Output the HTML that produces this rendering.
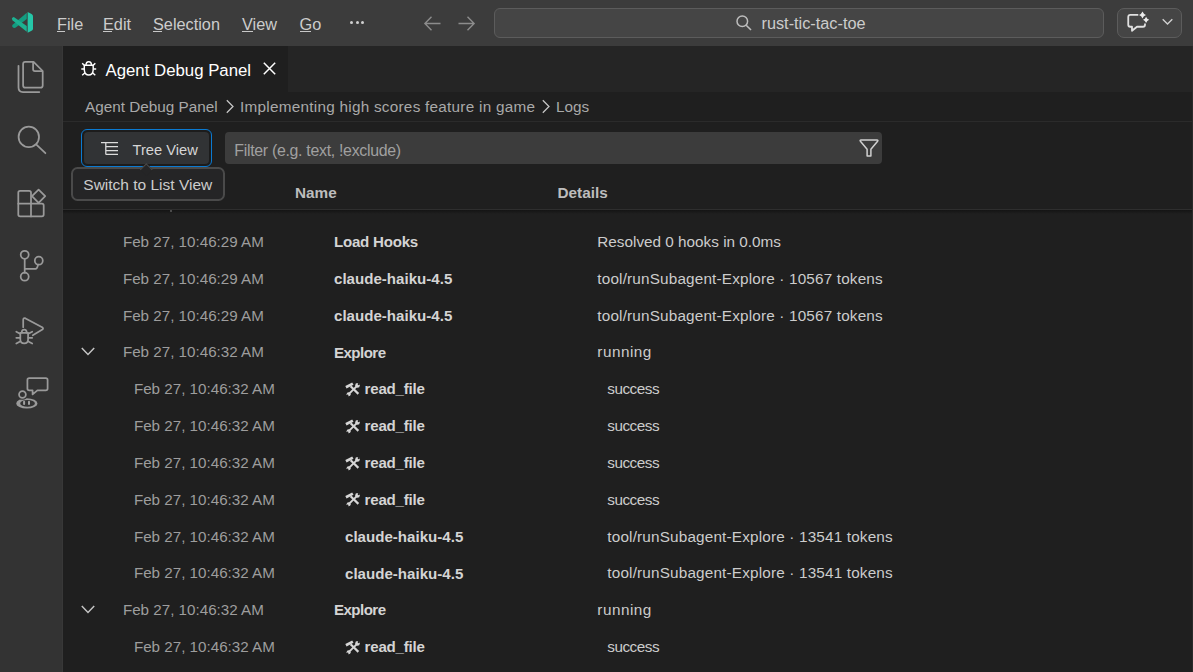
<!DOCTYPE html><html><head><meta charset="utf-8"><style>
html,body{margin:0;padding:0;width:1193px;height:672px;overflow:hidden;background:#1f1f1f;}
body{position:relative;font-family:"Liberation Sans",sans-serif;}
.t{position:absolute;white-space:nowrap;}
.b{position:absolute;box-sizing:border-box;}
svg{position:absolute;overflow:visible;}
u{text-decoration:none;border-bottom:1px solid currentColor;}
</style></head><body>
<div class="b" style="left:0;top:0;width:1193px;height:46px;background:#3c3c3c"></div>
<svg style="left:8px;top:8px" width="30" height="30" viewBox="0 0 672 672">
<path fill="#139c80" d="M420 108 L420 245 L175 438 Q135 462 100 425 Q78 395 110 368 Z"/>
<path fill="#1cb191" d="M130 200 Q100 205 88 232 Q82 258 105 278 L420 532 L420 405 Z"/>
<path fill="#25c7a8" d="M440 92 L528 135 Q560 152 560 185 L560 462 Q560 495 528 512 L440 555 Z"/>
</svg>
<div class="t" style="left:57px;top:16.10px;font-size:16.3px;line-height:16.3px;color:#cccccc;font-weight:400;">File</div>
<div class="b" style="left:57px;top:31px;width:8px;height:1.3px;background:#c8c8c8"></div>
<div class="t" style="left:103px;top:16.10px;font-size:16.3px;line-height:16.3px;color:#cccccc;font-weight:400;">Edit</div>
<div class="b" style="left:103px;top:31px;width:8.8px;height:1.3px;background:#c8c8c8"></div>
<div class="t" style="left:153px;top:16.10px;font-size:16.3px;line-height:16.3px;color:#cccccc;font-weight:400;">Selection</div>
<div class="b" style="left:153px;top:31px;width:8.8px;height:1.3px;background:#c8c8c8"></div>
<div class="t" style="left:242px;top:16.10px;font-size:16.3px;line-height:16.3px;color:#cccccc;font-weight:400;">View</div>
<div class="b" style="left:242px;top:31px;width:10.9px;height:1.3px;background:#c8c8c8"></div>
<div class="t" style="left:299.5px;top:16.10px;font-size:16.3px;line-height:16.3px;color:#cccccc;font-weight:400;">Go</div>
<div class="b" style="left:299.5px;top:31px;width:11.6px;height:1.3px;background:#c8c8c8"></div>
<div class="b" style="left:350px;top:21px;width:3px;height:3px;border-radius:50%;background:#d0d0d0"></div>
<div class="b" style="left:355.5px;top:21px;width:3px;height:3px;border-radius:50%;background:#d0d0d0"></div>
<div class="b" style="left:361px;top:21px;width:3px;height:3px;border-radius:50%;background:#d0d0d0"></div>
<svg style="left:424px;top:16px" width="17" height="15" viewBox="0 0 17 15"><path d="M7.5 0.8 L0.9 7.5 L7.5 14.2 M0.9 7.5 H16.5" fill="none" stroke="#8c8c8c" stroke-width="1.4"/></svg>
<svg style="left:458px;top:16px" width="17" height="15" viewBox="0 0 17 15"><path d="M9.5 0.8 L16.1 7.5 L9.5 14.2 M16.1 7.5 H0.5" fill="none" stroke="#8c8c8c" stroke-width="1.4"/></svg>
<div class="b" style="left:494px;top:8px;width:610px;height:30px;background:#454545;border:1px solid #5c5c5c;border-radius:6px"></div>
<svg style="left:736px;top:15px" width="16" height="16" viewBox="0 0 16 16"><circle cx="6.3" cy="6.3" r="5.3" fill="none" stroke="#bdbdbd" stroke-width="1.5"/><path d="M10.2 10.2 L15 15" stroke="#bdbdbd" stroke-width="1.6"/></svg>
<div class="t" style="left:761.5px;top:15.30px;font-size:16.3px;line-height:16.3px;color:#cccccc;font-weight:400;">rust-tic-tac-toe</div>
<div class="b" style="left:1117px;top:8px;width:65px;height:30px;background:#454545;border:1px solid #5c5c5c;border-radius:7px"></div>
<svg style="left:1122px;top:8px" width="30" height="30" viewBox="0 0 30 30">
<path d="M16.3 6.9 H8.25 Q6.25 6.9 6.25 8.9 V16.75 Q6.25 18.75 8.25 18.75 H10 V22.8 L15 18.75 H21 Q23 18.75 23 16.75 V15.4" fill="none" stroke="#e0e0e0" stroke-width="1.8" stroke-linejoin="round"/>
<path d="M20.5 3.5999999999999996 Q21.48 6.119999999999999 24.0 7.1 Q21.48 8.08 20.5 10.6 Q19.52 8.08 17.0 7.1 Q19.52 6.119999999999999 20.5 3.5999999999999996Z" fill="#ececec"/>
<path d="M24.1 8.700000000000001 Q24.968 10.932 27.200000000000003 11.8 Q24.968 12.668000000000001 24.1 14.9 Q23.232000000000003 12.668000000000001 21.0 11.8 Q23.232000000000003 10.932 24.1 8.700000000000001Z" fill="#ececec"/>
</svg>
<svg style="left:1162px;top:18px" width="12" height="8" viewBox="0 0 12 8"><path d="M0.7 1.2 L5.5 6 L10.3 1.2" fill="none" stroke="#cfcfcf" stroke-width="1.4"/></svg>
<div class="b" style="left:0;top:46px;width:63px;height:626px;background:#333333"></div>
<svg style="left:0;top:0" width="63" height="672" viewBox="0 0 63 672" fill="none" stroke="#9a9a9a" stroke-width="1.75" stroke-linejoin="round" stroke-linecap="round">
<path d="M25.3 61.9 H33.6 L42.7 71 V85.5 Q42.7 87.7 40.5 87.7 H25.3 Q23.1 87.7 23.1 85.5 V64.1 Q23.1 61.9 25.3 61.9Z"/>
<path d="M33.1 62.4 V69.2 Q33.1 71 34.9 71 H42.2"/>
<path d="M18.5 65.8 V87.5 Q18.5 92 23 92 H39.3"/>
<circle cx="28.8" cy="136.9" r="10.2"/>
<path d="M36.4 144.6 L45.4 153.2"/>
<path d="M20.1 190.9 H29.1 Q31 190.9 31 192.8 V203.7 H41.9 Q43.7 203.7 43.7 205.5 V214.6 Q43.7 216.4 41.9 216.4 H20.1 Q18.3 216.4 18.3 214.6 V192.8 Q18.3 190.9 20.1 190.9Z"/>
<path d="M18.3 203.7 H31 V216.4"/>
<path d="M38.6 189.6 L45.2 196.2 L38.6 202.8 L32 196.2Z"/>
<circle cx="24.7" cy="254.8" r="4"/>
<circle cx="24.7" cy="276.7" r="4"/>
<circle cx="38.8" cy="260.7" r="4"/>
<path d="M24.7 258.8 V272.7 M24.7 268.9 H35.4 Q37.4 268.9 38 264.7"/>
<path d="M23.2 327.2 V319.8 Q23.4 317.4 25.6 318.4 L42.6 327.6 Q43.6 328.6 42.4 329.6 L32.8 335.3"/>
<path d="M21.7 332.6 Q21.7 329.6 24.2 329.6 Q26.7 329.6 26.7 332.6"/>
<path d="M20.3 332.8 H28.1 V339.2 Q28.1 343.3 24.2 343.3 Q20.3 343.3 20.3 339.2Z"/>
<path d="M16.3 331.7 L20.1 333.7 M16.3 337.8 H20.1 M16.3 343.6 L20.1 341.5 M32.2 331.7 L28.4 333.7 M32.2 337.8 H28.4 M32.2 343.6 L28.4 341.5"/>
<path d="M29.2 378.1 H45.8 Q47.6 378.1 47.6 379.9 V388.6 Q47.6 390.4 45.8 390.4 H37.4 L32.6 394.4 V390.4 H29.2 Q27.4 390.4 27.4 388.6 V379.9 Q27.4 378.1 29.2 378.1Z"/>
<path fill="#9a9a9a" stroke="none" fill-rule="evenodd" d="M16.2 403.4 A10.65 5.2 0 1 0 37.5 403.4 A10.65 5.2 0 1 0 16.2 403.4Z M20.2 403.4 A7.35 3.3 0 1 0 34.9 403.4 A7.35 3.3 0 1 0 20.2 403.4Z"/>
<circle cx="22.45" cy="394.55" r="5.3" fill="#333333" stroke="none"/>
<circle cx="22.45" cy="394.55" r="3.4"/>
<path d="M24.1 401.8 V404 M29 401.8 V404" stroke-width="2" stroke="#a0a0a0"/>
</svg>
<div class="b" style="left:63px;top:46px;width:1130px;height:46px;background:#252525"></div>
<div class="b" style="left:63px;top:46px;width:225px;height:46px;background:#1f1f1f"></div>
<svg style="left:81px;top:61px" width="16" height="15" viewBox="0 0 16 15" fill="none" stroke="#ffffff" stroke-width="1.45">
<path d="M5 4.3 Q5 0.8 7.75 0.8 Q10.5 0.8 10.5 4.3"/>
<path d="M3.4 4.3 H12.1 Q12.4 7 12.1 9.6 Q11.6 14 7.75 14 Q3.9 14 3.4 9.6 Q3.1 7 3.4 4.3Z"/>
<path d="M0.3 8 H3.2 M15.2 8 H12.3 M1.2 2.2 L3.5 4.6 M14.3 2.2 L12 4.6 M1.2 14.3 L4 11.8 M14.3 14.3 L11.5 11.8"/></svg>
<div class="t" style="left:105.5px;top:62.98px;font-size:16.8px;line-height:16.8px;color:#ffffff;font-weight:400;">Agent Debug Panel</div>
<svg style="left:263px;top:62px" width="13" height="13" viewBox="0 0 13 13"><path d="M0.8 0.8 L12.2 12.2 M12.2 0.8 L0.8 12.2" stroke="#ffffff" stroke-width="1.5"/></svg>
<div class="b" style="left:63px;top:92px;width:1130px;height:29px;background:#1f1f1f"></div>
<div class="b" style="left:63px;top:121px;width:1130px;height:1px;background:#2b2b2b"></div>
<div class="t" style="left:85px;top:98.95px;font-size:15.3px;line-height:15.3px;color:#a9a9a9;font-weight:400;">Agent Debug Panel</div>
<svg style="left:226px;top:99px" width="8" height="14" viewBox="0 0 8 14"><path d="M0.8 1.3 L7 7.5 L0.8 13.7" fill="none" stroke="#c8c8c8" stroke-width="1.25"/></svg>
<div class="t" style="left:240px;top:98.95px;font-size:15.3px;line-height:15.3px;color:#a9a9a9;font-weight:400;letter-spacing:0.26px">Implementing high scores feature in game</div>
<svg style="left:542px;top:99px" width="8" height="14" viewBox="0 0 8 14"><path d="M0.8 1.3 L7 7.5 L0.8 13.7" fill="none" stroke="#c8c8c8" stroke-width="1.25"/></svg>
<div class="t" style="left:556px;top:98.95px;font-size:15.3px;line-height:15.3px;color:#a9a9a9;font-weight:400;">Logs</div>
<div class="b" style="left:80.9px;top:128.9px;width:131px;height:38.3px;background:#1c1c1c;border:1.35px solid #0b7ad1;border-radius:6px"></div>
<div class="b" style="left:83.6px;top:131.6px;width:125.6px;height:32.5px;background:#313335;border-radius:4px"></div>
<svg style="left:0;top:0" width="130" height="170" viewBox="0 0 130 170" fill="none" stroke="#dcdcdc" stroke-width="1.25">
<path d="M101 142.6 H118 M105.8 142.6 V154.4 M105.8 146.5 H118 M105.8 150.5 H118 M105.8 154.4 H118"/></svg>
<div class="t" style="left:132.5px;top:143.26px;font-size:14.7px;line-height:14.7px;color:#d6d6d6;font-weight:400;">Tree View</div>
<div class="b" style="left:225px;top:132px;width:657px;height:32px;background:#3c3c3c;border-radius:4px"></div>
<div class="t" style="left:234.3px;top:143.14px;font-size:15.9px;line-height:15.9px;color:#a0a0a0;font-weight:400;letter-spacing:-0.3px">Filter (e.g. text, !exclude)</div>
<svg style="left:859px;top:139px" width="20" height="18" viewBox="0 0 20 18" fill="none" stroke="#d0d0d0" stroke-width="1.5" stroke-linejoin="round">
<path d="M2 1.1 H18 Q19.4 1.1 18.6 2.2 L11.9 10.2 V16.9 H8.1 V10.2 L1.4 2.2 Q0.6 1.1 2 1.1Z"/></svg>
<div class="t" style="left:295px;top:185.15px;font-size:15.3px;line-height:15.3px;color:#bdbdbd;font-weight:700;">Name</div>
<div class="t" style="left:557.5px;top:185.15px;font-size:15.3px;line-height:15.3px;color:#bdbdbd;font-weight:700;">Details</div>
<div class="b" style="left:63px;top:209px;width:1130px;height:1px;background:#2e2e2e"></div>
<div class="b" style="left:63px;top:210px;width:1130px;height:4px;background:linear-gradient(#141414,#1f1f1f)"></div>
<div class="b" style="left:170px;top:210px;width:2px;height:2px;background:#4a4a4a"></div>
<div class="t" style="left:122.9px;top:234.03px;font-size:15.2px;line-height:15.2px;color:#9d9d9d;font-weight:400;">Feb 27, 10:46:29 AM</div>
<div class="t" style="left:334px;top:234.12px;font-size:15.1px;line-height:15.1px;color:#d4d4d4;font-weight:700;letter-spacing:-0.24px">Load Hooks</div>
<div class="t" style="left:597.3px;top:233.95px;font-size:15.3px;line-height:15.3px;color:#cccccc;font-weight:400;letter-spacing:0px">Resolved 0 hooks in 0.0ms</div>
<div class="t" style="left:122.9px;top:270.85px;font-size:15.2px;line-height:15.2px;color:#9d9d9d;font-weight:400;">Feb 27, 10:46:29 AM</div>
<div class="t" style="left:334px;top:270.94px;font-size:15.1px;line-height:15.1px;color:#d4d4d4;font-weight:700;letter-spacing:0px">claude-haiku-4.5</div>
<div class="t" style="left:597.3px;top:270.77px;font-size:15.3px;line-height:15.3px;color:#cccccc;font-weight:400;letter-spacing:0.17px">tool/runSubagent-Explore · 10567 tokens</div>
<div class="t" style="left:122.9px;top:307.67px;font-size:15.2px;line-height:15.2px;color:#9d9d9d;font-weight:400;">Feb 27, 10:46:29 AM</div>
<div class="t" style="left:334px;top:307.76px;font-size:15.1px;line-height:15.1px;color:#d4d4d4;font-weight:700;letter-spacing:0px">claude-haiku-4.5</div>
<div class="t" style="left:597.3px;top:307.59px;font-size:15.3px;line-height:15.3px;color:#cccccc;font-weight:400;letter-spacing:0.17px">tool/runSubagent-Explore · 10567 tokens</div>
<svg style="left:81px;top:347.36px" width="14" height="9" viewBox="0 0 14 9"><path d="M0.8 1 L7 7.4 L13.2 1" fill="none" stroke="#c5c5c5" stroke-width="1.5"/></svg>
<div class="t" style="left:122.9px;top:344.49px;font-size:15.2px;line-height:15.2px;color:#9d9d9d;font-weight:400;">Feb 27, 10:46:32 AM</div>
<div class="t" style="left:334px;top:344.58px;font-size:15.1px;line-height:15.1px;color:#d4d4d4;font-weight:700;letter-spacing:-0.55px">Explore</div>
<div class="t" style="left:597.3px;top:344.41px;font-size:15.3px;line-height:15.3px;color:#cccccc;font-weight:400;letter-spacing:0.5px">running</div>
<div class="t" style="left:133.9px;top:381.31px;font-size:15.2px;line-height:15.2px;color:#9d9d9d;font-weight:400;">Feb 27, 10:46:32 AM</div>
<svg style="left:342px;top:378.98px" width="20" height="20" viewBox="0 0 20 20">
<path d="M8.6 7.3 L16.4 14.9" stroke="#d6d6d6" stroke-width="2.2"/>
<path d="M3.3 7.0 L10.2 3.4 L11.5 5.8 L4.6 9.4 Z" fill="#d6d6d6"/>
<path d="M14.6 7.4 L7.2 14.6" stroke="#d6d6d6" stroke-width="2.0"/>
<circle cx="15.5" cy="6.4" r="2.3" fill="#d6d6d6"/>
<circle cx="16.7" cy="5.1" r="1.1" fill="#1f1f1f"/>
<circle cx="6.6" cy="15.2" r="2.0" fill="#d6d6d6"/>
<circle cx="5.6" cy="16.3" r="0.9" fill="#1f1f1f"/>
</svg>
<div class="t" style="left:364.6px;top:381.40px;font-size:15.1px;line-height:15.1px;color:#d4d4d4;font-weight:700;letter-spacing:-0.22px">read_file</div>
<div class="t" style="left:607.3px;top:381.23px;font-size:15.3px;line-height:15.3px;color:#cccccc;font-weight:400;letter-spacing:-0.5px">success</div>
<div class="t" style="left:133.9px;top:418.13px;font-size:15.2px;line-height:15.2px;color:#9d9d9d;font-weight:400;">Feb 27, 10:46:32 AM</div>
<svg style="left:342px;top:415.80px" width="20" height="20" viewBox="0 0 20 20">
<path d="M8.6 7.3 L16.4 14.9" stroke="#d6d6d6" stroke-width="2.2"/>
<path d="M3.3 7.0 L10.2 3.4 L11.5 5.8 L4.6 9.4 Z" fill="#d6d6d6"/>
<path d="M14.6 7.4 L7.2 14.6" stroke="#d6d6d6" stroke-width="2.0"/>
<circle cx="15.5" cy="6.4" r="2.3" fill="#d6d6d6"/>
<circle cx="16.7" cy="5.1" r="1.1" fill="#1f1f1f"/>
<circle cx="6.6" cy="15.2" r="2.0" fill="#d6d6d6"/>
<circle cx="5.6" cy="16.3" r="0.9" fill="#1f1f1f"/>
</svg>
<div class="t" style="left:364.6px;top:418.22px;font-size:15.1px;line-height:15.1px;color:#d4d4d4;font-weight:700;letter-spacing:-0.22px">read_file</div>
<div class="t" style="left:607.3px;top:418.05px;font-size:15.3px;line-height:15.3px;color:#cccccc;font-weight:400;letter-spacing:-0.5px">success</div>
<div class="t" style="left:133.9px;top:454.95px;font-size:15.2px;line-height:15.2px;color:#9d9d9d;font-weight:400;">Feb 27, 10:46:32 AM</div>
<svg style="left:342px;top:452.62px" width="20" height="20" viewBox="0 0 20 20">
<path d="M8.6 7.3 L16.4 14.9" stroke="#d6d6d6" stroke-width="2.2"/>
<path d="M3.3 7.0 L10.2 3.4 L11.5 5.8 L4.6 9.4 Z" fill="#d6d6d6"/>
<path d="M14.6 7.4 L7.2 14.6" stroke="#d6d6d6" stroke-width="2.0"/>
<circle cx="15.5" cy="6.4" r="2.3" fill="#d6d6d6"/>
<circle cx="16.7" cy="5.1" r="1.1" fill="#1f1f1f"/>
<circle cx="6.6" cy="15.2" r="2.0" fill="#d6d6d6"/>
<circle cx="5.6" cy="16.3" r="0.9" fill="#1f1f1f"/>
</svg>
<div class="t" style="left:364.6px;top:455.04px;font-size:15.1px;line-height:15.1px;color:#d4d4d4;font-weight:700;letter-spacing:-0.22px">read_file</div>
<div class="t" style="left:607.3px;top:454.87px;font-size:15.3px;line-height:15.3px;color:#cccccc;font-weight:400;letter-spacing:-0.5px">success</div>
<div class="t" style="left:133.9px;top:491.77px;font-size:15.2px;line-height:15.2px;color:#9d9d9d;font-weight:400;">Feb 27, 10:46:32 AM</div>
<svg style="left:342px;top:489.44px" width="20" height="20" viewBox="0 0 20 20">
<path d="M8.6 7.3 L16.4 14.9" stroke="#d6d6d6" stroke-width="2.2"/>
<path d="M3.3 7.0 L10.2 3.4 L11.5 5.8 L4.6 9.4 Z" fill="#d6d6d6"/>
<path d="M14.6 7.4 L7.2 14.6" stroke="#d6d6d6" stroke-width="2.0"/>
<circle cx="15.5" cy="6.4" r="2.3" fill="#d6d6d6"/>
<circle cx="16.7" cy="5.1" r="1.1" fill="#1f1f1f"/>
<circle cx="6.6" cy="15.2" r="2.0" fill="#d6d6d6"/>
<circle cx="5.6" cy="16.3" r="0.9" fill="#1f1f1f"/>
</svg>
<div class="t" style="left:364.6px;top:491.86px;font-size:15.1px;line-height:15.1px;color:#d4d4d4;font-weight:700;letter-spacing:-0.22px">read_file</div>
<div class="t" style="left:607.3px;top:491.69px;font-size:15.3px;line-height:15.3px;color:#cccccc;font-weight:400;letter-spacing:-0.5px">success</div>
<div class="t" style="left:133.9px;top:528.59px;font-size:15.2px;line-height:15.2px;color:#9d9d9d;font-weight:400;">Feb 27, 10:46:32 AM</div>
<div class="t" style="left:345px;top:528.68px;font-size:15.1px;line-height:15.1px;color:#d4d4d4;font-weight:700;letter-spacing:0px">claude-haiku-4.5</div>
<div class="t" style="left:607.3px;top:528.51px;font-size:15.3px;line-height:15.3px;color:#cccccc;font-weight:400;letter-spacing:0.17px">tool/runSubagent-Explore · 13541 tokens</div>
<div class="t" style="left:133.9px;top:565.41px;font-size:15.2px;line-height:15.2px;color:#9d9d9d;font-weight:400;">Feb 27, 10:46:32 AM</div>
<div class="t" style="left:345px;top:565.50px;font-size:15.1px;line-height:15.1px;color:#d4d4d4;font-weight:700;letter-spacing:0px">claude-haiku-4.5</div>
<div class="t" style="left:607.3px;top:565.33px;font-size:15.3px;line-height:15.3px;color:#cccccc;font-weight:400;letter-spacing:0.17px">tool/runSubagent-Explore · 13541 tokens</div>
<svg style="left:81px;top:605.10px" width="14" height="9" viewBox="0 0 14 9"><path d="M0.8 1 L7 7.4 L13.2 1" fill="none" stroke="#c5c5c5" stroke-width="1.5"/></svg>
<div class="t" style="left:122.9px;top:602.23px;font-size:15.2px;line-height:15.2px;color:#9d9d9d;font-weight:400;">Feb 27, 10:46:32 AM</div>
<div class="t" style="left:334px;top:602.32px;font-size:15.1px;line-height:15.1px;color:#d4d4d4;font-weight:700;letter-spacing:-0.55px">Explore</div>
<div class="t" style="left:597.3px;top:602.15px;font-size:15.3px;line-height:15.3px;color:#cccccc;font-weight:400;letter-spacing:0.5px">running</div>
<div class="t" style="left:133.9px;top:639.05px;font-size:15.2px;line-height:15.2px;color:#9d9d9d;font-weight:400;">Feb 27, 10:46:32 AM</div>
<svg style="left:342px;top:636.72px" width="20" height="20" viewBox="0 0 20 20">
<path d="M8.6 7.3 L16.4 14.9" stroke="#d6d6d6" stroke-width="2.2"/>
<path d="M3.3 7.0 L10.2 3.4 L11.5 5.8 L4.6 9.4 Z" fill="#d6d6d6"/>
<path d="M14.6 7.4 L7.2 14.6" stroke="#d6d6d6" stroke-width="2.0"/>
<circle cx="15.5" cy="6.4" r="2.3" fill="#d6d6d6"/>
<circle cx="16.7" cy="5.1" r="1.1" fill="#1f1f1f"/>
<circle cx="6.6" cy="15.2" r="2.0" fill="#d6d6d6"/>
<circle cx="5.6" cy="16.3" r="0.9" fill="#1f1f1f"/>
</svg>
<div class="t" style="left:364.6px;top:639.14px;font-size:15.1px;line-height:15.1px;color:#d4d4d4;font-weight:700;letter-spacing:-0.22px">read_file</div>
<div class="t" style="left:607.3px;top:638.97px;font-size:15.3px;line-height:15.3px;color:#cccccc;font-weight:400;letter-spacing:-0.5px">success</div>
<div class="b" style="left:71px;top:167px;width:154px;height:33.7px;background:#252526;border:2px solid #4a4a4a;border-radius:6.5px"></div>
<div class="b" style="left:142.3px;top:164.9px;width:8.5px;height:8.5px;background:#252526;border-left:1.6px solid #4a4a4a;border-top:1.6px solid #4a4a4a;transform:rotate(45deg);transform-origin:center"></div>
<div class="t" style="left:83.3px;top:176.58px;font-size:15.5px;line-height:15.5px;color:#cccccc;font-weight:400;">Switch to List View</div>
<div class="b" style="left:1192px;top:46px;width:1px;height:626px;background:#2a2a2a"></div>
<div class="b" style="left:62px;top:46px;width:1px;height:626px;background:#383838"></div>
</body></html>
